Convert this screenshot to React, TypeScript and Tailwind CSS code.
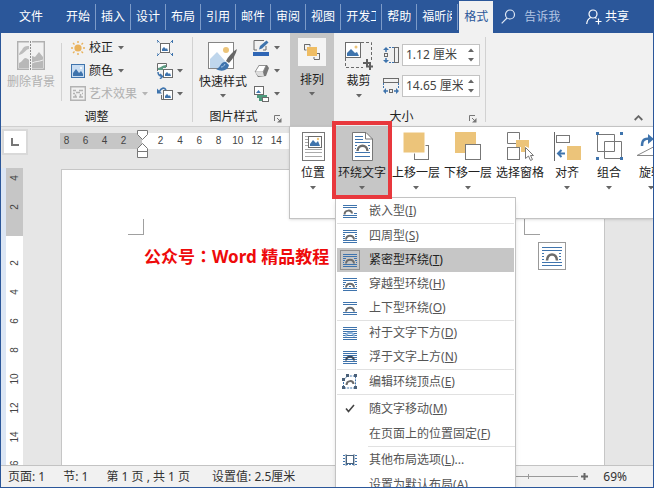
import { useState, type ReactNode } from 'react';

const BLUE = '#3f74ad';
const GREY = '#6b6b6b';
const GOLD = '#ecc47a';

type WrapKind = 'inline' | 'square' | 'tight' | 'through' | 'topBottom' | 'behind' | 'front';

// Text lines around (or across) a small arch
function WrapIcon({ kind, size = 'w-[14px] h-[13px]' }: { kind: WrapKind; size?: string }) {
  const across = kind === 'behind' || kind === 'front';
  return (
    <svg viewBox="0 0 14 13" className={size} fill="none">
      <path d="M0 .5h14M0 2.5h14M0 10.5h14M0 12.5h14" stroke={BLUE} />
      {across && <path d="M0 4.5h14M0 6.5h14M0 8.5h14" stroke={BLUE} />}
      {kind === 'square' && (
        <path d="M0 4.5h2M12 4.5h2M0 6.5h2M12 6.5h2M0 8.5h2M12 8.5h2" stroke={BLUE} />
      )}
      {kind === 'tight' && (
        <path d="M0 4.5h3M11 4.5h3M0 6.5h2M12 6.5h2M0 8.5h1M13 8.5h1" stroke={BLUE} />
      )}
      {kind === 'through' && (
        <path d="M0 4.5h3M11 4.5h3M0 6.5h2M12 6.5h2M0 8.5h1M6 8.5h2M13 8.5h1" stroke={BLUE} />
      )}
      {kind === 'inline' && <path d="M11 8.5h3" stroke={BLUE} />}
      <path
        d={kind === 'inline' ? 'M1.5 9.5c.3-5 7-5 7.5-1' : 'M3 9.5c.4-5 7.6-5 8 0'}
        stroke={kind === 'behind' ? '#8db4dc' : kind === 'front' ? '#3b4a5c' : GREY}
        strokeWidth="2"
      />
    </svg>
  );
}

// Larger version used by the floating layout options button
function LayoutOptionsIcon() {
  return (
    <svg viewBox="0 0 20 19" className="w-5 h-[19px]" fill="none">
      <path d="M0 .5h20M0 3.5h20M0 15.5h20M0 18.5h20" stroke={BLUE} />
      <path d="M0 6.5h3M17 6.5h3M0 9.5h3M17 9.5h3M0 12.5h3M17 12.5h3" stroke={BLUE} strokeDasharray="2 1" />
      <path d="M5 13.500c.4-8 9.600-8 10 0" stroke={GREY} strokeWidth="2.600" />
    </svg>
  );
}

function Caret({ light = false }: { light?: boolean }) {
  return (
    <svg viewBox="0 0 6 4" className="w-[6px] h-1 shrink-0">
      <path d="M0 0h6L3 3.5z" fill={light ? '#b5b5b5' : '#666'} />
    </svg>
  );
}

function Launcher({ label }: { label: string }) {
  return (
    <button aria-label={label} className="w-4 flex items-center pt-1">
      <svg viewBox="0 0 8 8" className="size-2" fill="none" stroke="#777">
        <path d="M.5 6V.5H6M3 3l3 3" />
        <path d="M7.5 3v4.5H3z" fill="#777" stroke="none" />
      </svg>
    </button>
  );
}

function Picture({ className }: { className: string }) {
  return (
    <svg viewBox="0 0 14 14" className={className}>
      <rect x=".5" y=".5" width="13" height="13" fill="#c9ddf2" stroke={BLUE} />
      <path d="M2 12V9l3-4 3 4 2-2 2 3v2z" fill={BLUE} />
      <circle cx="10" cy="4" r="1" fill="#fff" />
    </svg>
  );
}

const sunIcon = (
  <svg viewBox="0 0 14 14" className="size-[14px]">
    <circle cx="7" cy="7" r="3.6" fill="#e9b25c" />
    <path
      d="M7 0v2M7 12v2M0 7h2M12 7h2M2 2l1.5 1.5M10.500 10.500L12 12M12 2l-1.500 1.500M3.500 10.500L2 12"
      stroke="#e9b25c"
      strokeWidth="1.4"
    />
  </svg>
);

const effectsIcon = (
  <svg viewBox="0 0 16 15" className="w-4 h-[15px]" fill="none" stroke="#b3b3b3">
    <path d="M.7 .7h14.600v13.600H.7z" strokeWidth="1.400" />
    <path d="M3 4.500h3M9 4.500h4M3 7.500h2M6 6.500h4M12 7.500h1M3 11h4M9 11h4M5.500 8.500v3M10.500 8v3" strokeWidth="1.500" />
  </svg>
);

const removeBgIcon = (
  <svg viewBox="0 0 28 29" className="w-7 h-[29px]" fill="none">
    <path d="M.7 .7h26.600v27.600H.7z" stroke="#b0b0b0" strokeWidth="1.400" />
    <path d="M2 22c3-1 4-4 6-5 2 0 3 1 4 2v8H2zM15 15l3 1 4-5 4 5v11H15z" fill="#b8b8b8" />
    <path d="M2 13c1-3 3-3 4-6 2-2 4-2 6-2v3c-3 0-5 5-10 6z" fill="#bdbdbd" />
    <path d="M13.500 0v29" stroke="#f1f1f1" strokeWidth="3" />
    <path d="M13.500 0v29" stroke="#8d8d8d" strokeDasharray="2 1" />
    <path d="M15 22c4-2 6-1 11-3" stroke="#eee" />
  </svg>
);

const compressIcon = (
  <svg viewBox="0 0 16 16" className="size-4" fill="none">
    <rect x="3.500" y="3.500" width="9" height="9" stroke={GREY} fill="#fff" />
    <path d="M5 11V9l2-2 2 2 1-1 1 3z" fill={BLUE} />
    <path d="M0 0l2.500 2.500M16 0l-2.500 2.500M0 16l2.500-2.500M16 16l-2.500-2.500M0 3V.5h1M15 .5h.5V3M0 13v2.500h1M15 15.500h.5V13" stroke={BLUE} />
  </svg>
);

const changeIcon = (
  <svg viewBox="0 0 16 16" className="size-4" fill="none">
    <path d="M.5 8V.5h9V4" stroke={GREY} fill="#fff" />
    <path d="M1 5c3 0 4-3 8-3v3H6v2H1z" fill="#5c9b83" />
    <rect x="6.500" y="6.500" width="9" height="8" stroke={GREY} fill="#fff" />
    <path d="M8 13v-2l2-2 2 2 1-1 1 3z" fill={BLUE} />
    <path d="M1 9c0 3 1 4 4 4.500M3 11l2.500 2.500L3 16" stroke={BLUE} strokeWidth="1.500" />
  </svg>
);

const resetIcon = (
  <svg viewBox="0 0 16 14" className="w-4 h-[14px]" fill="none">
    <rect x="6.500" y="3.500" width="9" height="9" stroke={GREY} fill="#fff" />
    <path d="M8 11V9l2-2 2 2 1-1 1 3z" fill={BLUE} />
    <path d="M9 3C7 0 4 1 2.500 4.500" stroke={BLUE} strokeWidth="1.800" />
    <path d="M0 1.500V6.500h5z" fill={BLUE} />
    <path d="M4.500 8v4.500h2" stroke={GREY} />
  </svg>
);

const quickStyleIcon = (
  <svg viewBox="0 0 30 30" className="size-[30px]" fill="none">
    <rect x=".5" y=".5" width="25" height="26" fill="#fff" stroke="#858585" />
    <circle cx="18" cy="8" r="3" fill={GOLD} />
    <path d="M2 25V17l7-7 9 10 2 6H2z" fill="#bfd6ec" />
    <path d="M29 7c-5 3-9 8-11 12l3 2c4-4 7-9 8-14z" fill="#666" />
    <path d="M18 20c-6-1-5 6-10 7 5 3 12 2 13-4z" fill={BLUE} />
    <path d="M13 25c2 0 3-1 4-3" stroke="#a8c8e8" />
  </svg>
);

const borderIcon = (
  <svg viewBox="0 0 17 16" className="w-[17px] h-4" fill="none">
    <path d="M11 .5H1V10h3M13 6v4h-3" stroke={GREY} />
    <path d="M6 9.500l1-3.500 6.500-5.500 2 2L9 8.500z" fill={BLUE} />
    <rect y="12" width="16" height="4" fill="#2f66b5" />
  </svg>
);

const effectIcon = (
  <svg viewBox="0 0 16 14" className="w-4 h-[14px]">
    <path d="M1 8L5 1h8l2 3-3 8-8 1z" fill="#777" />
    <path d="M1 8l4-6.500h7L9 8z" fill="#fff" stroke="#888" strokeWidth=".8" />
    <path d="M1 8h8l1 4H4z" fill="#ddd" />
  </svg>
);

const layoutIcon = (
  <svg viewBox="0 0 16 16" className="size-4" fill="none">
    <rect x=".5" y=".5" width="9" height="8" stroke={GREY} fill="#fff" />
    <path d="M2 7l2.500-3L7 7z" fill={BLUE} />
    <path d="M3 9h10v2H8v4H5v-3H3z" fill="#4d9a7d" />
    <rect x="8.500" y="11.500" width="6" height="4" stroke={GREY} fill="#fff" />
  </svg>
);

const arrangeIcon = (
  <svg viewBox="0 0 16 16" className="size-4" fill="none">
    <rect x="3" y="3" width="10" height="9" fill="#efbd64" />
    <path d="M6 .5H.5V6h2M10 15.500h5.500V10M.5 5V.5M6 .5v2M10 13v2M13 9.500h3" stroke={GREY} />
  </svg>
);

const cropIcon = (
  <svg viewBox="0 0 28 28" className="size-7" fill="none">
    <path d="M16 .5h10.500v18M.5 16v9.500H18" stroke={GREY} strokeDasharray="3 2" />
    <rect x=".5" y=".5" width="15" height="15" fill="#fff" stroke={GREY} />
    <path d="M2 14v-3l4-4 4 4 2-1 2 4z" fill={BLUE} />
    <circle cx="11" cy="5" r="1.500" fill={GOLD} />
    <path d="M22 17v7.500h6M18 21h7v7" stroke="#606060" strokeWidth="2" />
  </svg>
);

const heightIcon = (
  <svg viewBox="0 0 16 16" className="size-4" fill="none">
    <path d="M3 0L0 3h6zM3 16l-3-3h6z" fill={BLUE} />
    <path d="M3 2v3M3 11v3" stroke={BLUE} strokeWidth="1.500" />
    <path d="M6 .5h5M6 15.500h5" stroke={BLUE} strokeDasharray="2 1" />
    <rect x="1.500" y="6.500" width="3" height="3" stroke={GREY} />
    <rect x="11.500" y=".5" width="4" height="15" stroke={GREY} />
  </svg>
);

const widthIcon = (
  <svg viewBox="0 0 16 16" className="size-4" fill="none">
    <rect x=".5" y=".5" width="15" height="4" stroke={GREY} />
    <path d="M0 13l3-3v6zM16 13l-3-3v6z" fill={BLUE} />
    <path d="M2 13h3M11 13h3" stroke={BLUE} strokeWidth="1.500" />
    <path d="M.5 5v5M15.500 5v5" stroke={BLUE} strokeDasharray="2 1" />
    <rect x="6.500" y="11.500" width="3" height="3" stroke={GREY} />
  </svg>
);

const positionIcon = (
  <svg viewBox="0 0 23 29" className="w-[23px] h-[29px]" fill="none">
    <rect x=".5" y=".5" width="22" height="28" fill="#fff" stroke="#777" />
    <path d="M3 4.500h3M3 7.500h3M3 10.500h3M3 13.500h3M3 17.500h17M3 20.500h17M3 24.500h17" stroke="#aaa" />
    <rect x="6.500" y="4.500" width="13" height="11" fill="#fff" stroke={GREY} />
    <path d="M8 14v-2l3-4 3 3 2-2 2 5z" fill={BLUE} />
    <circle cx="16" cy="7" r="1.200" fill={GOLD} />
  </svg>
);

const wrapTextIcon = (
  <svg viewBox="0 0 21 29" className="w-[21px] h-[29px]" fill="none">
    <path d="M.5 .5H14l6.500 6.500v21.500H.5z" fill="#fff" stroke="#777" />
    <path d="M13.500 .5V7h7" stroke="#777" />
    <path d="M3 4.500h8M3 7.500h8M3 10.500h15M3 13.500h2M16 13.500h2M3 16.500h1M17 16.500h1M3 20.500h15M3 24.500h15" stroke={BLUE} />
    <path d="M5.500 19c.3-7 9.700-7 10 0" stroke={GREY} strokeWidth="2.500" />
  </svg>
);

const forwardIcon = (
  <svg viewBox="0 0 27 29" className="w-[27px] h-[29px]" fill="none">
    <rect x="11.500" y="13.500" width="14" height="14" fill="#fff" stroke="#777" />
    <rect width="22" height="21" fill={GOLD} stroke="#fff" />
  </svg>
);

const backwardIcon = (
  <svg viewBox="0 0 27 29" className="w-[27px] h-[29px]" fill="none">
    <rect width="21" height="21" fill={GOLD} />
    <rect x="10.500" y="12.500" width="15" height="15" fill="#fff" stroke="#777" />
  </svg>
);

const selectIcon = (
  <svg viewBox="0 0 27 29" className="w-[27px] h-[29px]" fill="none">
    <path d="M9.500 11.500h-9V.5h12v7" stroke="#777" />
    <path d="M9 8h13v8l-4-2v6h-4v-5H9z" fill={GOLD} />
    <rect x=".5" y="15.500" width="12" height="12" stroke="#777" fill="#fff" />
    <path d="M18.500 15.500v11l3-2.500 2 4.500 2-1-2-4h3z" fill="#fff" stroke="#777" />
  </svg>
);

const alignIcon = (
  <svg viewBox="0 0 27 29" className="w-[27px] h-[29px]" fill="none">
    <path d="M.5 0v29" stroke="#666" />
    <rect x="2.500" y="3.500" width="13" height="7" stroke="#777" />
    <rect x="13" y="14" width="14" height="14" fill={GOLD} />
    <path d="M11 21.500H5M7.500 18l-3.500 3.500 3.500 3.500" stroke={BLUE} strokeWidth="2" />
  </svg>
);

const groupIcon = (
  <svg viewBox="0 0 27 29" className="w-[27px] h-[29px]" fill="none">
    <path d="M1.500 2.500h17v17h-17zM8.500 9.500h17v17h-17z" stroke="#777" />
    <path d="M0 0h3v3H0zM24 0h3v3h-3zM0 25h3v3H0zM24 25h3v3h-3z" fill={BLUE} />
  </svg>
);

const rotateIcon = (
  <svg viewBox="0 0 36 29" className="w-9 h-[29px]" fill="none">
    <path d="M9 14c0-6 2-7.500 8-7.500" stroke={BLUE} strokeWidth="2.500" />
    <path d="M15 2l6 5-6 5z" fill={BLUE} />
    <path d="M4 23.500h28V9z" fill="#fff" stroke="#888" />
  </svg>
);

const editPointsIcon = (
  <svg viewBox="0 0 16 16" className="size-4" fill="none">
    <path d="M1.500 13V6l4-4h8v12h-12" stroke={BLUE} strokeDasharray="2 1" />
    <path d="M4.500 11c.3-5 6.500-5 7-1" stroke={GREY} strokeWidth="2" />
    <path d="M0 4h3v3H0zM4 0h3v3H4zM12 0h3v3h-3zM0 12h3v3H0zM12 12h3v3h-3z" fill="#4a6078" />
  </svg>
);

const moreLayoutIcon = (
  <svg viewBox="0 0 14 12" className="w-[14px] h-3" fill="none">
    <path d="M0 1.500h14M0 4.500h2M0 7.500h2M12 4.500h2M12 7.500h2M0 10.500h14" stroke={BLUE} strokeDasharray="2 1" />
    <rect x="3.500" y="1.500" width="7" height="8" fill="#fff" stroke="#49637e" />
    <path d="M3 0v12M11 0v12" stroke="#49637e" strokeWidth=".8" />
  </svg>
);

const checkIcon = (
  <svg viewBox="0 0 10 9" className="w-[10px] h-[9px]" fill="none">
    <path d="M1 4.500l2.500 3L9 1" stroke="#444" strokeWidth="1.600" />
  </svg>
);

const tabs = ['开始', '插入', '设计', '布局', '引用', '邮件', '审阅', '视图', '开发工', '帮助', '福昕阅'];

const arrangeItems: { label: string; icon: ReactNode; caret: boolean }[] = [
  { label: '位置', icon: positionIcon, caret: true },
  { label: '环绕文字', icon: wrapTextIcon, caret: true },
  { label: '上移一层', icon: forwardIcon, caret: true },
  { label: '下移一层', icon: backwardIcon, caret: true },
  { label: '选择窗格', icon: selectIcon, caret: false },
  { label: '对齐', icon: alignIcon, caret: true },
  { label: '组合', icon: groupIcon, caret: true },
  { label: '旋转', icon: rotateIcon, caret: true },
];

type WrapItem = { label: string; hotkey: string; icon?: ReactNode; suffix?: string; rule?: 'full' | 'inset' };

const wrapItems: WrapItem[] = [
  { label: '嵌入型', hotkey: 'I', icon: <WrapIcon kind="inline" />, rule: 'full' },
  { label: '四周型', hotkey: 'S', icon: <WrapIcon kind="square" /> },
  { label: '紧密型环绕', hotkey: 'T', icon: <WrapIcon kind="tight" /> },
  { label: '穿越型环绕', hotkey: 'H', icon: <WrapIcon kind="through" /> },
  { label: '上下型环绕', hotkey: 'O', icon: <WrapIcon kind="topBottom" />, rule: 'full' },
  { label: '衬于文字下方', hotkey: 'D', icon: <WrapIcon kind="behind" /> },
  { label: '浮于文字上方', hotkey: 'N', icon: <WrapIcon kind="front" />, rule: 'full' },
  { label: '编辑环绕顶点', hotkey: 'E', icon: editPointsIcon, rule: 'full' },
];

const layoutItems: WrapItem[] = [
  { label: '随文字移动', hotkey: 'M', icon: checkIcon },
  { label: '在页面上的位置固定', hotkey: 'F', rule: 'inset' },
  { label: '其他布局选项', hotkey: 'L', icon: moreLayoutIcon, suffix: '...' },
  { label: '设置为默认布局', hotkey: 'A' },
];

function TitleTabs() {
  return (
    <header className="flex h-[33px] shrink-0 bg-[#2b579a] text-white">
      <button className="w-[60px] shrink-0">文件</button>
      <nav className="flex shrink-0">
        {tabs.map((tab) => (
          <div key={tab} className="flex items-center">
            <button className="mx-[5px] max-w-[30px] overflow-hidden whitespace-nowrap">{tab}</button>
            <span className="h-[26px] w-px bg-[#7d9bc8]" />
          </div>
        ))}
        <button className="mt-px ml-px w-[34px] bg-[#f1f1f1] text-[#2b579a]">格式</button>
      </nav>
      <button className="ml-2 flex shrink-0 items-center gap-2 text-[#b3c5e3]">
        <svg viewBox="0 0 15 15" className="size-[15px]" fill="none" stroke="#dfe8f5" strokeWidth="1.200">
          <circle cx="9" cy="5.500" r="4.500" />
          <path d="M6 9L.7 14.300" />
        </svg>
        告诉我
      </button>
      <button className="mr-6 ml-auto flex items-center gap-[3px]">
        <svg viewBox="0 0 16 16" className="size-4" fill="none" stroke="#fff" strokeWidth="1.200">
          <circle cx="7" cy="5" r="4" />
          <path d="M.7 15c.3-4 2-5.500 4-6.500M9 8.500l1.500 1M12.500 9.500v6M9.500 12.500h6" />
        </svg>
        共享
      </button>
    </header>
  );
}

function SmallButton({ label, icon, disabled }: { label: string; icon: ReactNode; disabled?: boolean }) {
  return (
    <button className={`flex h-[23px] items-center ${disabled ? 'text-[#b0b0b0]' : ''}`}>
      <span className="flex w-4 justify-center">{icon}</span>
      <span className="mr-[5px] ml-[3px]">{label}</span>
      <Caret light={disabled} />
    </button>
  );
}

function IconButton({ label, icon, caret = true }: { label: string; icon: ReactNode; caret?: boolean }) {
  return (
    <button aria-label={label} className="flex h-[23px] items-center gap-1">
      <span className="flex w-[17px] justify-center">{icon}</span>
      {caret && <Caret />}
    </button>
  );
}

function SizeField({ label, value, icon }: { label: string; value: string; icon: ReactNode }) {
  const [text, setText] = useState(value);
  return (
    <div className="flex items-center gap-[3px]">
      <label htmlFor={label}>{icon}</label>
      <div className="flex h-[22px] w-[78px] border border-[#c3c3c3] bg-white">
        <input
          id={label}
          aria-label={label}
          value={text}
          onChange={(e) => setText(e.target.value)}
          className="w-[60px] min-w-0 pl-[3px] text-[#444] outline-none"
        />
        <div className="flex flex-1 flex-col items-center justify-center gap-[6px]">
          <button aria-label={`${label} +`} className="rotate-180"><Caret /></button>
          <button aria-label={`${label} -`}><Caret /></button>
        </div>
      </div>
    </div>
  );
}

function Divider() {
  return <span className="my-1 w-px shrink-0 bg-[#d2d2d2]" />;
}

function Ribbon() {
  return (
    <div className="relative z-10 flex shrink-0 border-b border-[#cfcfcf] bg-[#f1f1f1]">
      <section className="flex w-[191px] shrink-0 flex-col">
        <div className="flex h-[75px] pt-[3px]">
          <button className="flex w-[60px] flex-col items-center gap-1 pt-[5px] text-[#b0b0b0]">
            {removeBgIcon}
            删除背景
          </button>
          <span className="my-[7px] w-px bg-[#d2d2d2]" />
          <div className="flex w-[92px] flex-col pl-2">
            <SmallButton label="校正" icon={sunIcon} />
            <SmallButton label="颜色" icon={<Picture className="size-[14px]" />} />
            <SmallButton label="艺术效果" icon={effectsIcon} disabled />
          </div>
          <div className="flex flex-col pl-[2px]">
            <IconButton label="压缩图片" icon={compressIcon} caret={false} />
            <IconButton label="更改图片" icon={changeIcon} />
            <IconButton label="重设图片" icon={resetIcon} />
          </div>
        </div>
        <h2 className="text-center leading-[18px]">调整</h2>
      </section>
      <Divider />
      <section className="flex w-[97px] shrink-0 flex-col">
        <div className="flex h-[75px] pt-[3px]">
          <button className="flex w-[60px] flex-col items-center gap-[2px] pt-[6px]">
            {quickStyleIcon}
            快速样式
            <span className="pt-[2px]"><Caret /></span>
          </button>
          <div className="flex flex-col">
            <IconButton label="图片边框" icon={borderIcon} />
            <IconButton label="图片效果" icon={effectIcon} />
            <IconButton label="图片版式" icon={layoutIcon} />
          </div>
        </div>
        <div className="flex leading-[18px]">
          <h2 className="flex-1 text-center">图片样式</h2>
          <Launcher label="设置形状格式" />
        </div>
      </section>
      <button className="flex w-11 shrink-0 flex-col items-center bg-[#c6c6c6] pt-[5px]">
        <span className="mb-[6px] flex size-7 items-center justify-center bg-[#f4f4f4]">{arrangeIcon}</span>
        排列
        <span className="pt-1"><Caret /></span>
      </button>
      <section className="flex w-[151px] shrink-0 flex-col">
        <div className="flex h-[75px] pt-[3px]">
          <button className="flex w-[49px] flex-col items-center gap-[3px] pt-[6px]">
            {cropIcon}
            裁剪
            <span className="pt-[2px]"><Caret /></span>
          </button>
          <div className="flex flex-col gap-[9px] pt-2">
            <SizeField label="高度" value="1.12 厘米" icon={heightIcon} />
            <SizeField label="宽度" value="14.65 厘米" icon={widthIcon} />
          </div>
        </div>
        <div className="flex leading-[18px]">
          <h2 className="flex-1 text-center">大小</h2>
          <Launcher label="高级版式" />
        </div>
      </section>
      <Divider />
      <button aria-label="折叠功能区" className="mt-auto mr-[10px] mb-[5px] ml-auto">
        <svg viewBox="0 0 9 6" className="w-[9px] h-[6px]" fill="none" stroke="#666" strokeWidth="1.800">
          <path d="M.7 5l3.800-3.800L8.300 5" />
        </svg>
      </button>
      <ArrangeFlyout />
    </div>
  );
}

function ArrangeFlyout() {
  return (
    <div className="absolute top-[93px] right-0 left-[288px] flex h-[93px] border border-r-0 border-[#c3c3c3] bg-white pl-[2px] shadow">
      {arrangeItems.map((item) => {
        const open = item.label === '环绕文字';
        const width = open ? 'w-14' : item.label.length > 2 ? 'w-[52px]' : 'w-[42px]';
        return (
          <div key={item.label} className={`relative shrink-0 ${width}`}>
            <button
              className={`flex h-[70px] w-full flex-col items-center whitespace-nowrap pt-[5px] text-[#222] ${open ? 'bg-[#c6c6c6]' : ''}`}
            >
              {item.icon}
              <span className="pt-1 pb-[5px]">{item.label}</span>
              {item.caret && <Caret />}
            </button>
            {open && (
              <>
                <WrapMenu />
                <span className="pointer-events-none absolute -inset-x-[2px] -top-[6px] h-[78px] border-4 border-[#e8383d]" />
              </>
            )}
          </div>
        );
      })}
    </div>
  );
}

function MenuRow({ item, height, selected }: { item: WrapItem; height: string; selected: boolean }) {
  return (
    <>
      <button
        role="menuitem"
        className={`mx-px flex items-center px-[3px] ${height} ${selected ? 'bg-[#c6c6c6] text-[#222]' : 'text-[#555]'}`}
      >
        <span
          className={`mr-[9px] flex size-5 items-center justify-center ${selected ? 'border border-[#8f8f8f]' : ''}`}
        >
          {item.icon}
        </span>
        <span>
          {item.label}(<u>{item.hotkey}</u>){item.suffix}
        </span>
      </button>
      {item.rule && <hr className={`border-[#e1e1e1] ${item.rule === 'inset' ? 'ml-8' : 'mx-px'}`} />}
    </>
  );
}

function WrapMenu() {
  return (
    <div
      role="menu"
      className="absolute top-[70px] left-px flex w-[181px] flex-col border border-[#c3c3c3] bg-white pt-px shadow-md"
    >
      {wrapItems.map((item) => (
        <MenuRow key={item.hotkey} item={item} height="h-6" selected={item.hotkey === 'T'} />
      ))}
      <div className="flex flex-col pt-px">
        {layoutItems.map((item) => (
          <MenuRow key={item.hotkey} item={item} height="h-[25px]" selected={false} />
        ))}
      </div>
    </div>
  );
}

function HorizontalRuler() {
  return (
    <div className="flex h-[41px] shrink-0 pt-1 font-['Liberation_Sans',sans-serif] text-[10px] text-[#444]">
      <button
        aria-label="制表符"
        className="ml-[3px] flex size-[22px] items-center justify-center bg-white outline-2 outline-[#d9d9d9]"
      >
        <span className="size-2 border-b-2 border-l-2 border-[#777]" />
      </button>
      <div className="mt-[2px] ml-[34px] flex h-4 flex-1 leading-4">
        <div className="flex w-[82px] shrink-0 justify-end overflow-hidden bg-[#c6c6c6] pr-[9px]">
          {[8, 6, 4, 2].map((n) => (
            <span key={n} className="w-[19px] shrink-0 text-center">{n}</span>
          ))}
        </div>
        <div className="relative flex-1 bg-white pl-[9px]">
          <div className="flex w-[135px]">
            {[2, 4, 6, 8, 10, 12, 14].map((n) => (
              <span key={n} className="flex-1 text-center">{n}</span>
            ))}
          </div>
          {/* Indent markers sit across the edge between margin and text */}
          <svg viewBox="0 0 11 28" className="absolute -top-[3px] -left-[5px] h-7 w-[11px]" fill="#fff" stroke="#777">
            <path d="M.5 .5h10v4l-5 5-5-5zM5.500 13.500l5 5v3H.5v-3zM.5 21.500h10v6H.5z" />
          </svg>
        </div>
      </div>
    </div>
  );
}

function RulerMark({ value }: { value: number }) {
  return (
    <span className="flex h-[29px] shrink-0 items-center justify-center">
      <span className="-rotate-90">{value}</span>
    </span>
  );
}

function VerticalRuler() {
  return (
    <div className="flex shrink-0 bg-[#dce6f4] pl-[5px] font-['Liberation_Sans',sans-serif] text-[10px] text-[#444]">
      <div className="flex w-[17px] flex-col overflow-hidden bg-white">
        <div className="flex h-[68px] shrink-0 flex-col justify-end bg-[#c6c6c6] pb-[15px]">
          {[4, 2].map((n) => (
            <RulerMark key={n} value={n} />
          ))}
        </div>
        <div className="flex shrink-0 flex-col pt-3">
          {[2, 4, 6, 8, 10, 12, 14, 16].map((n) => (
            <RulerMark key={n} value={n} />
          ))}
        </div>
      </div>
    </div>
  );
}

function Document() {
  return (
    <div className="flex min-h-0 flex-1">
      <VerticalRuler />
      <article className="mt-px mr-12 ml-[38px] flex-1 border-x border-t border-[#c6c6c6] bg-white pt-[49px]">
        <div className="flex justify-between px-[64px]">
          <span className="ml-[2px] size-4 border-r border-b border-[#a0a0a0]" />
          <span className="size-4 border-b border-l border-[#a0a0a0]" />
        </div>
        <div className="flex items-start justify-between pr-[38px] pl-[82px]">
          <p className="pt-[9px] text-[17px] leading-[24px] font-bold text-[#ee0a0a]">
            公众号<span className="font-['Noto_Sans_CJK_TC',sans-serif]">：</span>Word 精品教程
          </p>
          <button
            aria-label="布局选项"
            className="mt-[7px] flex size-7 items-center justify-center border border-[#999] bg-white"
          >
            <LayoutOptionsIcon />
          </button>
        </div>
      </article>
    </div>
  );
}

function StatusBar() {
  const [zoom, setZoom] = useState(34);
  return (
    <footer className="flex h-[22px] shrink-0 items-center border-t border-[#c3c3c3] bg-[#f1f1f1] pl-[7px] whitespace-nowrap text-[#333]">
      <span>页面: 1</span>
      <span className="ml-[18px]">节: 1</span>
      <span className="ml-[18px]">第 1 页 , 共 1 页</span>
      <span className="ml-[22px]">设置值: 2.5厘米</span>
      <div className="relative ml-auto flex items-center">
        <input
          type="range"
          aria-label="显示比例"
          value={zoom}
          onChange={(e) => setZoom(Number(e.target.value))}
          className="h-3 w-[100px] appearance-none bg-transparent [&::-webkit-slider-runnable-track]:h-px [&::-webkit-slider-runnable-track]:bg-[#999] [&::-webkit-slider-thumb]:-mt-[5px] [&::-webkit-slider-thumb]:h-[11px] [&::-webkit-slider-thumb]:w-[5px] [&::-webkit-slider-thumb]:appearance-none [&::-webkit-slider-thumb]:bg-[#555]"
        />
        <span className="pointer-events-none absolute left-1/2 h-[5px] w-px bg-[#999]" />
      </div>
      <button aria-label="放大" className="mx-[3px]">
        <svg viewBox="0 0 7 7" className="size-[7px]" stroke="#666" strokeWidth="2">
          <path d="M3.500 0v7M0 3.500h7" />
        </svg>
      </button>
      <span className="mr-[26px] ml-3">69%</span>
    </footer>
  );
}

function App() {
  return (
    <div className="flex h-screen flex-col overflow-hidden border-x border-b border-[#2b579a] bg-[#e6e6e6] font-['Noto_Sans','Noto_Sans_CJK_SC',sans-serif] text-[12px] leading-[16px] text-[#222]">
      <TitleTabs />
      <Ribbon />
      <HorizontalRuler />
      <Document />
      <StatusBar />
    </div>
  );
}

export default App;
